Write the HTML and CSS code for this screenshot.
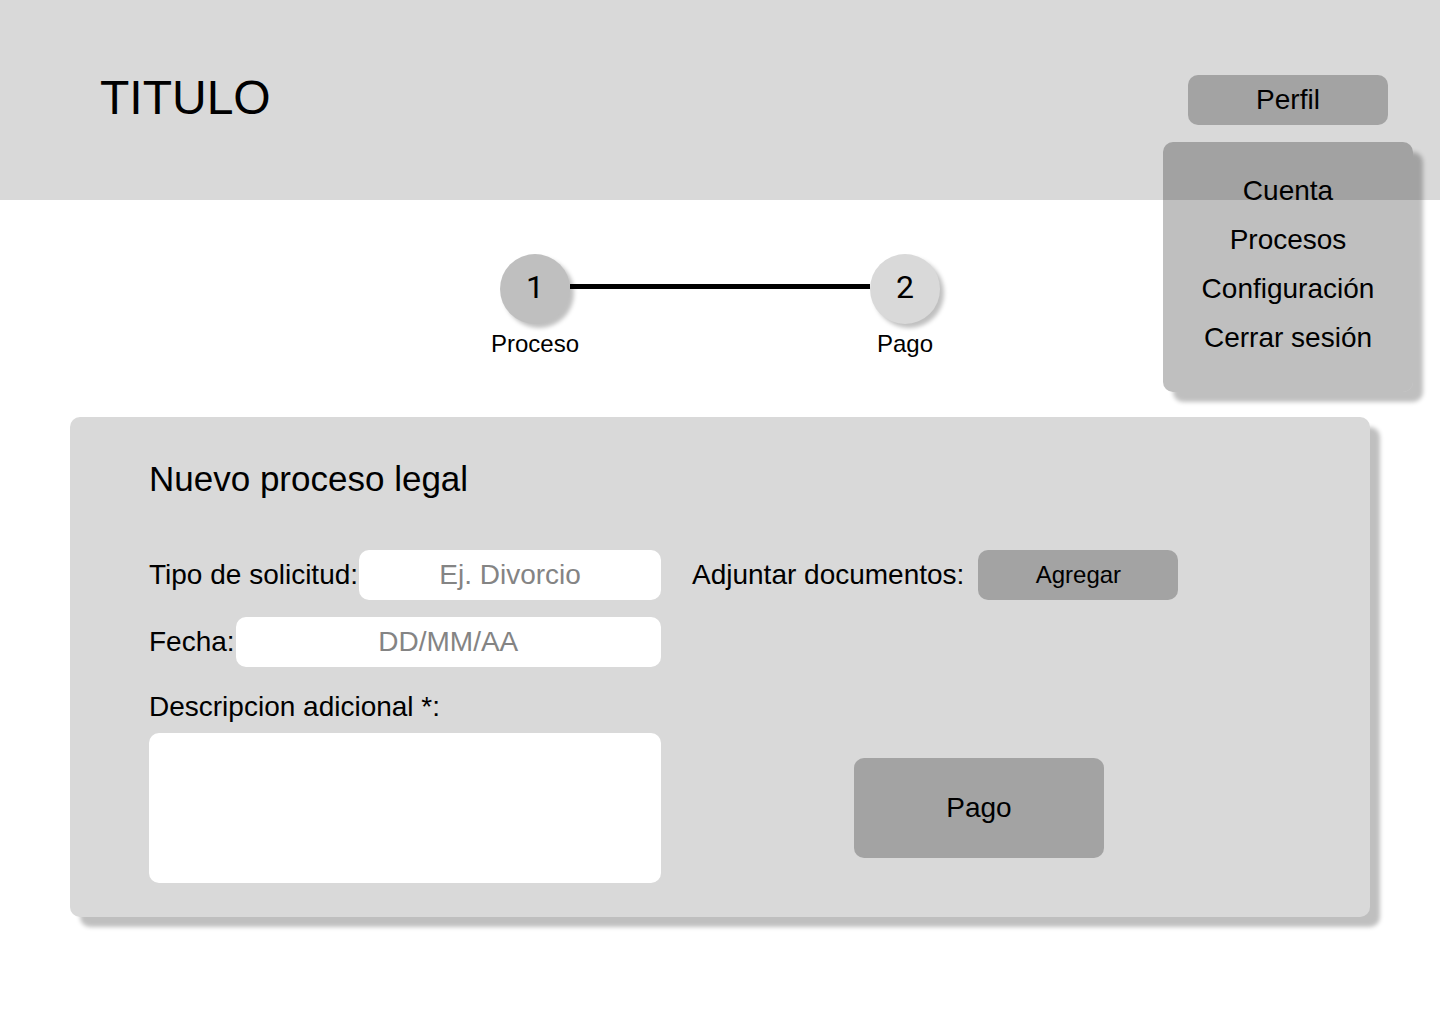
FILE: index.html
```html
<!DOCTYPE html>
<html lang="es">
<head>
  <meta charset="utf-8">
  <meta name="viewport" content="width=device-width, initial-scale=1">
  <title>Nuevo proceso legal</title>
  <link rel="stylesheet" href="styles.css">
</head>
<body>
  <header class="header">
    <h1 class="title">TITULO</h1>
    <div class="account">
      <button class="button profile" type="button" aria-expanded="true" aria-controls="account-menu">Perfil</button>
      <nav class="menu" id="account-menu">
        <a class="menu-link" href="#cuenta">Cuenta</a>
        <a class="menu-link" href="#procesos">Procesos</a>
        <a class="menu-link" href="#configuracion">Configuración</a>
        <a class="menu-link" href="#salir">Cerrar sesión</a>
      </nav>
    </div>
  </header>

  <main class="main">
    <ol class="steps">
      <li class="step">
        <span class="circle current">1</span>
        <span class="step-label">Proceso</span>
      </li>
      <li class="connector" aria-hidden="true"></li>
      <li class="step">
        <span class="circle">2</span>
        <span class="step-label">Pago</span>
      </li>
    </ol>

    <form class="panel">
      <h2 class="heading">Nuevo proceso legal</h2>
      <div class="columns">
        <div class="fields">
          <div class="field">
            <label for="tipo">Tipo de solicitud:</label>
            <input class="input" id="tipo" type="text" placeholder="Ej. Divorcio">
          </div>
          <div class="field">
            <label for="fecha">Fecha:</label>
            <input class="input" id="fecha" type="text" placeholder="DD/MM/AA">
          </div>
          <div class="description">
            <label for="descripcion">Descripcion adicional *:</label>
            <textarea class="input textarea" id="descripcion"></textarea>
          </div>
        </div>
        <div class="actions">
          <div class="attach">
            <label for="adjuntar">Adjuntar documentos:</label>
            <button class="button add" id="adjuntar" type="button">Agregar</button>
          </div>
          <button class="button pay" type="submit">Pago</button>
        </div>
      </div>
    </form>
  </main>
</body>
</html>
```
FILE: styles.css
```css
* {
  box-sizing: border-box;
}

body {
  margin: 0;
  background: #fff;
  color: #000;
  font-family: "Liberation Sans", Arial, sans-serif;
  font-size: 28px;
  line-height: 32px;
}

.header {
  display: flex;
  align-items: center;
  justify-content: space-between;
  min-height: 200px;
  padding: 0 52px 0 100px;
  background: #d9d9d9;
}

.title {
  margin: 0;
  padding-bottom: 4px;
  font-size: 48px;
  font-weight: 400;
  line-height: 56px;
}

.button {
  height: 50px;
  padding: 0;
  border: 0;
  border-radius: 10px;
  background: #a3a3a3;
  color: inherit;
  font: inherit;
  cursor: pointer;
}

.account {
  position: relative;
}

.profile {
  display: block;
  width: 200px;
}

.menu {
  position: absolute;
  top: 67px;
  left: -25px;
  right: -25px;
  z-index: 1;
  display: flex;
  flex-direction: column;
  padding: 24px 0 30px;
  border-radius: 10px;
  background: rgba(0, 0, 0, 0.25);
  box-shadow: 10px 10px 4px rgba(0, 0, 0, 0.25);
  text-align: center;
}

.menu-link {
  color: inherit;
  line-height: 49px;
  text-decoration: none;
}

.main {
  padding: 54px 70px 96px;
}

.steps {
  display: flex;
  max-width: 440px;
  margin: 0 auto 59px;
  padding: 0;
  list-style: none;
}

.step {
  display: flex;
  flex-direction: column;
  align-items: center;
  gap: 6px;
  width: 70px;
}

.circle {
  display: flex;
  align-items: center;
  justify-content: center;
  width: 70px;
  height: 70px;
  padding-bottom: 4px;
  border-radius: 50%;
  background: #d9d9d9;
  box-shadow: 4px 4px 4px rgba(0, 0, 0, 0.25);
  font-family: Roboto, sans-serif;
  font-size: 32px;
}

.current {
  background: #bfbfbf;
}

.step-label {
  font-size: 24px;
  line-height: 28px;
}

.connector {
  z-index: 1;
  flex: 1;
  height: 5px;
  margin-top: 30px;
  background: #000;
}

.panel {
  padding: 40px 79px 34px;
  border-radius: 10px;
  background: #d9d9d9;
  box-shadow: 10px 10px 4px rgba(0, 0, 0, 0.25);
}

.heading {
  margin: 0 0 49px;
  font-size: 35px;
  font-weight: 400;
  line-height: 44px;
}

.columns {
  display: grid;
  grid-template-columns: 512fr 599fr;
  gap: 31px;
}

.fields {
  display: flex;
  flex-direction: column;
  gap: 17px;
}

.field {
  display: flex;
  align-items: center;
  gap: 1px;
}

.input {
  flex: 1;
  min-width: 0;
  height: 50px;
  padding: 0 10px;
  border: 0;
  border-radius: 10px;
  background: #fff;
  color: inherit;
  font: inherit;
  text-align: center;
}

.input::placeholder {
  color: #848484;
  opacity: 1;
}

.description {
  display: flex;
  flex-direction: column;
  gap: 10px;
  padding-top: 7px;
}

.textarea {
  flex: none;
  height: 150px;
  padding: 10px;
  resize: none;
  text-align: left;
}

.actions {
  display: flex;
  flex-direction: column;
  justify-content: space-between;
  padding: 0 25px 25px 0;
}

.attach {
  display: flex;
  align-items: center;
  gap: 14px;
}

.add {
  width: 200px;
  font-size: 24px;
}

.pay {
  align-self: center;
  width: 250px;
  height: 100px;
}

@media (max-width: 1200px) {
  .columns {
    grid-template-columns: 1fr;
  }

  .actions {
    gap: 32px;
  }
}
```
